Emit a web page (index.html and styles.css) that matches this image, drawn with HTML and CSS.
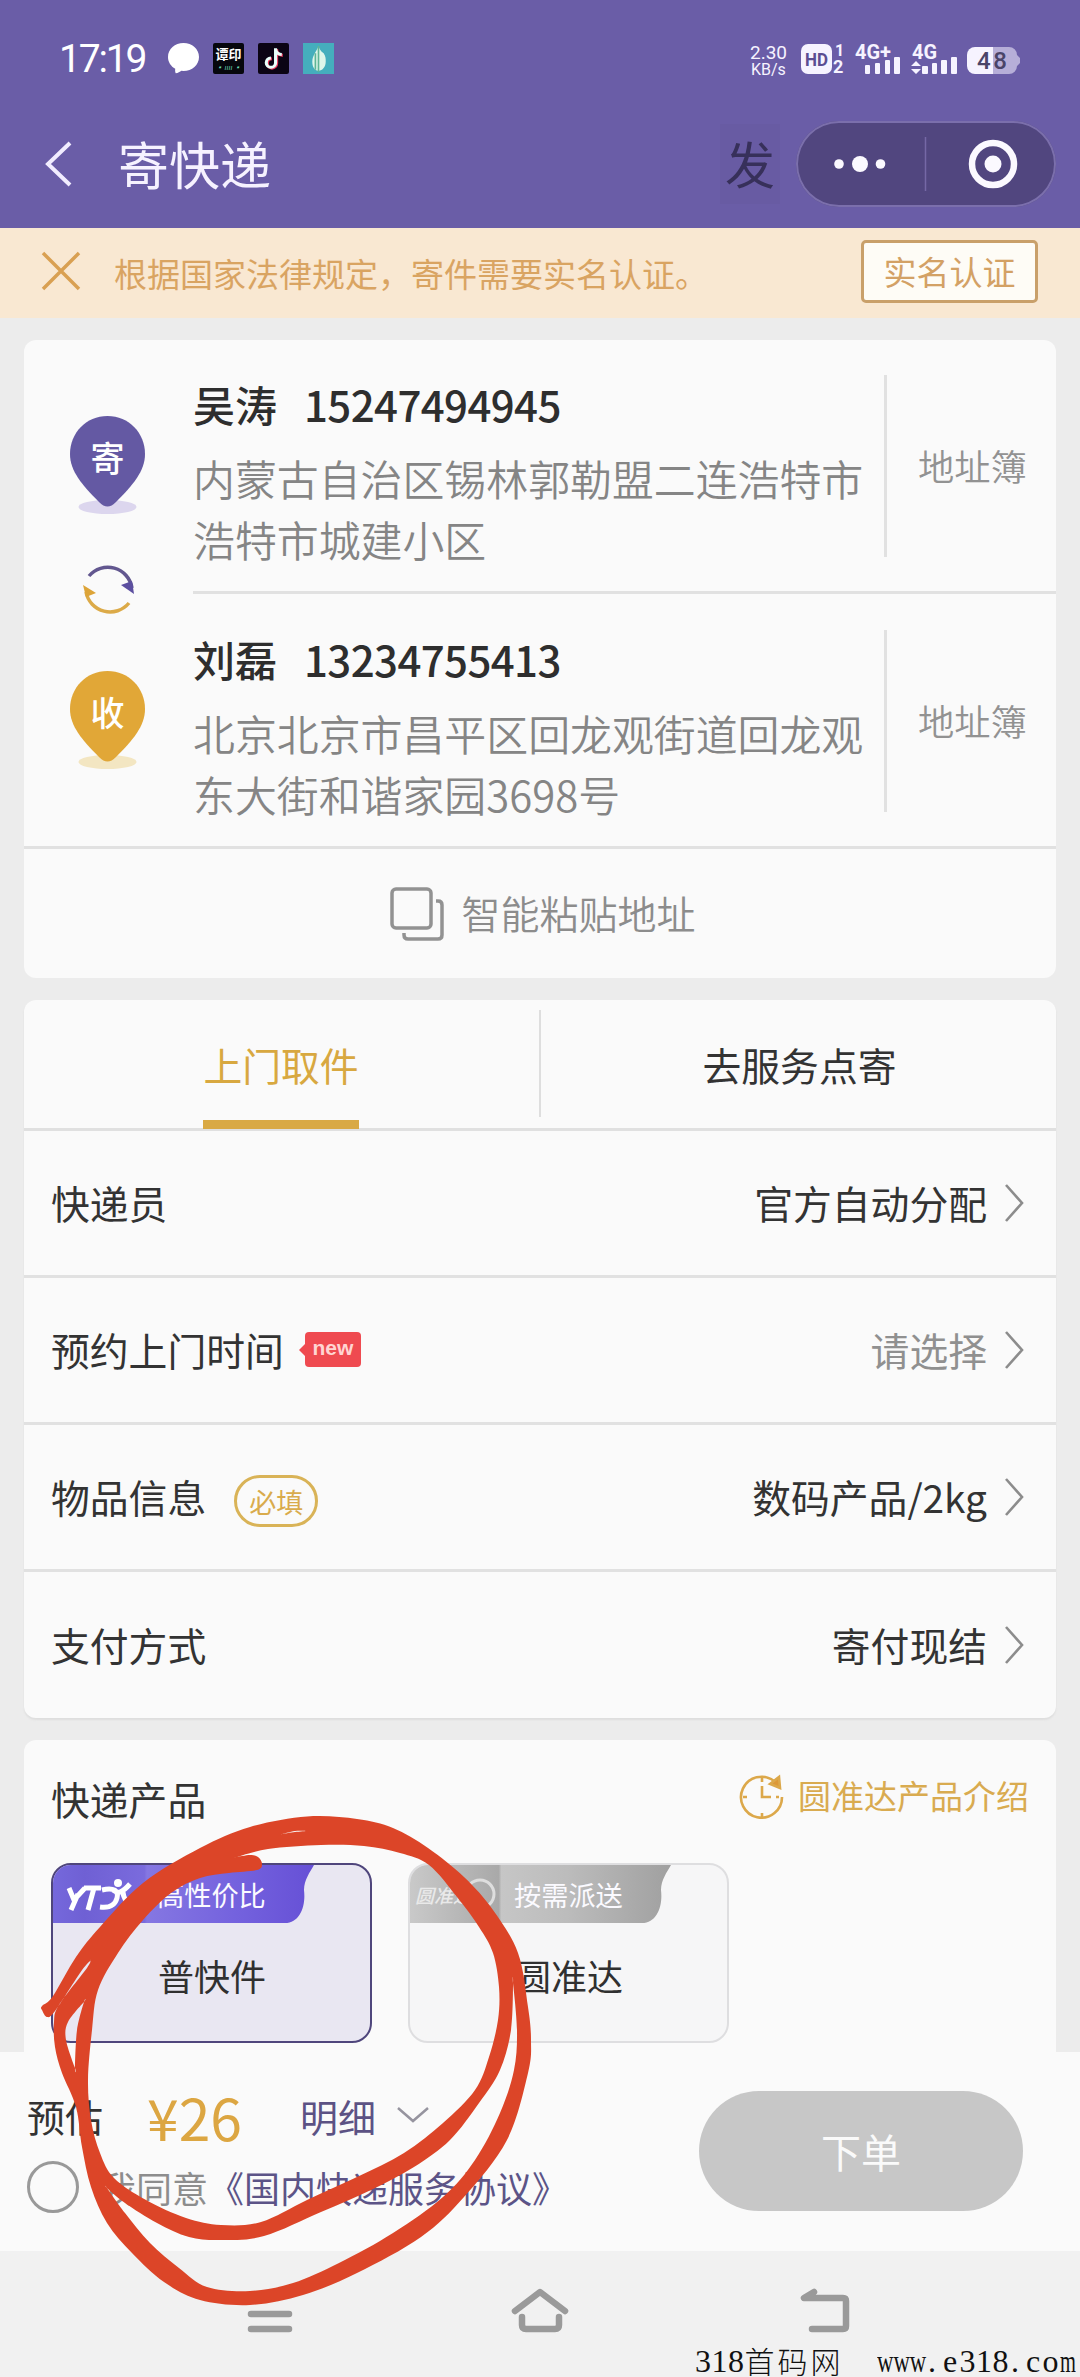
FILE: index.html
```html
<!DOCTYPE html>
<html lang="zh-CN">
<head>
<meta charset="utf-8">
<title>寄快递</title>
<link rel="stylesheet" href="styles.css">
</head>
<body>
<div class="screen">
  <header class="header">
    <div class="status">
      <div class="status-left">
        <span class="clock">17:19</span>
        <svg class="app-icon bubble" viewBox="0 0 30 30"><path d="M15 0C6.700 0 0 5.800 0 13.500c0 5 2.900 9 7 11.500-.2 1.500-.2 3 .5 4.300 2.200-.4 4-1.400 5.500-2.500l2 .2c8.300 0 15-5.800 15-13.500S23.300 0 15 0z" fill="#fff"/></svg>
        <div class="app-icon mint"><b>谭印</b><i>▪ ıııı ▪</i></div>
        <svg class="app-icon" viewBox="0 0 30 30"><rect width="30" height="30" rx="2" fill="#0b0414"/><path d="M17 5v14a4.500 4.500 0 1 1-4.500-4.500M17 6c.5 3 3 5 6 5.200" fill="none" stroke="#e8385c" stroke-width="3" transform="translate(1 .8)"/><path d="M17 5v14a4.500 4.500 0 1 1-4.500-4.500M17 6c.5 3 3 5 6 5.200" fill="none" stroke="#e9fffb" stroke-width="3"/></svg>
        <svg class="app-icon" viewBox="0 0 30 30"><rect width="30" height="30" fill="#45aebd"/><path d="M15 3c1 3 2 5 5 7 2 3 2 5 2 8 0 5-3 9-7 9s-6-4-6-9c0-6 5-11 6-15z" fill="#dff6ea"/><path d="M15 3v25M12 10v16" stroke="#5fb596" stroke-width="1.600"/></svg>
      </div>
      <div class="status-right">
        <div class="speed"><span>2.30</span><span>KB/s</span></div>
        <svg class="signals" width="222" height="36" viewBox="0 0 222 36">
          <g fill="#f6f3ff" font-family="Roboto, sans-serif" font-weight="700">
            <rect x="0" y="3" width="31" height="30" rx="7"/>
            <text x="4" y="25" font-size="19" fill="#5b4d92" textLength="23" lengthAdjust="spacingAndGlyphs">HD</text>
            <text x="34" y="15" font-size="16">1</text><text x="32" y="32" font-size="18">2</text>
            <text x="54" y="18" font-size="21" textLength="36" lengthAdjust="spacingAndGlyphs">4G+</text>
            <rect x="64" y="24" width="5" height="9" rx="1"/><rect x="74" y="22" width="5" height="11" rx="1"/><rect x="84" y="19" width="5" height="14" rx="1"/><rect x="93" y="16" width="6" height="17" rx="1"/>
            <text x="111" y="18" font-size="21" textLength="25" lengthAdjust="spacingAndGlyphs">4G</text>
            <path d="M110 25l5-5 5 5zM110 28l5 5 5-5z"/>
            <rect x="121" y="25" width="6" height="8" rx="1"/><rect x="131" y="22" width="5" height="11" rx="1"/><rect x="140" y="19" width="6" height="14" rx="1"/><rect x="150" y="16" width="6" height="17" rx="1"/>
            <path d="M174 6h18v27h-18a8 8 0 0 1-8-8V14a8 8 0 0 1 8-8z"/>
            <path d="M192 6h16a8 8 0 0 1 8 8l3 3v5l-3 3a8 8 0 0 1-8 8h-16z" fill="#b6aed8"/>
            <text x="176" y="28" font-size="24" font-weight="500" fill="#4a4468" textLength="30">48</text>
          </g>
        </svg>
      </div>
    </div>
    <div class="titlebar">
      <svg class="back" width="28" height="48" viewBox="0 0 28 48"><path d="M25 3L3 24l22 21" fill="none" stroke="#f1ecff" stroke-width="4"/></svg>
      <h1>寄快递</h1>
      <span class="fa">发</span>
      <div class="capsule">
        <svg width="260" height="86" viewBox="0 0 260 86"><g fill="#fbf9ff"><circle cx="43" cy="43" r="4.800"/><circle cx="64" cy="43" r="8"/><circle cx="84.500" cy="43" r="4.800"/><circle cx="197" cy="43" r="8.500"/></g><circle cx="197" cy="43" r="21" fill="none" stroke="#fbf9ff" stroke-width="6.500"/><path d="M129.500 16v54" stroke="#7568a6" stroke-width="1.500"/></svg>
      </div>
    </div>
  </header>

  <div class="notice">
    <svg width="40" height="40" viewBox="0 0 40 40"><path d="M2 2l36 36M38 2L2 38" stroke="#d9a052" stroke-width="3.500"/></svg>
    <p>根据国家法律规定，寄件需要实名认证。</p>
    <button class="verify">实名认证</button>
  </div>

  <main class="main">
    <section class="card addresses">
      <div class="markers">
        <svg width="80" height="102" viewBox="0 0 80 102"><ellipse cx="39.500" cy="91" rx="29" ry="7" fill="#dcd6ee"/><path d="M39.500 0C18 0 2 17 2 38c0 17 12 31 29 48 6 6 11 6 17 0 17-17 29-31 29-48C77 17 61 0 39.500 0z" fill="#6459a3"/><text x="39.500" y="55" text-anchor="middle" class="pin-text">寄</text></svg>
        <svg class="swap" width="54" height="54" viewBox="0 0 54 54"><path d="M7 14A24.500 24.500 0 0 1 50 26" fill="none" stroke="#62578f" stroke-width="3.500"/><path d="M39 23l11-4 2 13z" fill="#5c4fa0"/><path d="M47 41A24.500 24.500 0 0 1 4 30" fill="none" stroke="#dcaa48" stroke-width="3.500"/><path d="M1 23l13 8-10 4z" fill="#dda438"/></svg>
        <svg width="80" height="102" viewBox="0 0 80 102"><ellipse cx="39.500" cy="91" rx="29" ry="7" fill="#f3e6c2"/><path d="M39.500 0C18 0 2 17 2 38c0 17 12 31 29 48 6 6 11 6 17 0 17-17 29-31 29-48C77 17 61 0 39.500 0z" fill="#e1a737"/><text x="39.500" y="55" text-anchor="middle" class="pin-text">收</text></svg>
      </div>
      <div class="people">
        <div class="person">
          <div class="info">
            <div class="who"><span>吴涛</span><span class="phone">15247494945</span></div>
            <p>内蒙古自治区锡林郭勒盟二连浩特市浩特市城建小区</p>
          </div>
          <a class="book">地址簿</a>
        </div>
        <div class="person">
          <div class="info">
            <div class="who"><span>刘磊</span><span class="phone">13234755413</span></div>
            <p>北京北京市昌平区回龙观街道回龙观东大街和谐家园3698号</p>
          </div>
          <a class="book">地址簿</a>
        </div>
      </div>
      <div class="paste">
        <svg width="54" height="54" viewBox="0 0 54 54" fill="none" stroke="#929292" stroke-width="3.500"><rect x="2" y="2" width="39" height="39" rx="4"/><path d="M46 14h2q4 0 4 4v30q0 4-4 4H18q-4 0-4-4v-2"/></svg>
        <span>智能粘贴地址</span>
      </div>
    </section>

    <section class="card options">
      <div class="tabs">
        <div class="tab active"><span>上门取件</span></div>
        <div class="tab"><span>去服务点寄</span></div>
      </div>
      <div class="row"><span>快递员</span><span class="value">官方自动分配</span><svg class="chev" viewBox="0 0 20 38"><path d="M2 1l16 18L2 37"/></svg></div>
      <div class="row"><span>预约上门时间</span><span class="new">new</span><span class="value muted">请选择</span><svg class="chev" viewBox="0 0 20 38"><path d="M2 1l16 18L2 37"/></svg></div>
      <div class="row"><span>物品信息</span><span class="required">必填</span><span class="value">数码产品/2kg</span><svg class="chev" viewBox="0 0 20 38"><path d="M2 1l16 18L2 37"/></svg></div>
      <div class="row"><span>支付方式</span><span class="value">寄付现结</span><svg class="chev" viewBox="0 0 20 38"><path d="M2 1l16 18L2 37"/></svg></div>
    </section>

    <section class="card products">
      <div class="products-head">
        <span>快递产品</span>
        <a class="intro"><svg width="46" height="46" viewBox="0 0 46 46" fill="none" stroke="#dca84a" stroke-width="2.600"><path d="M35 7A20.500 20.500 0 1 0 43 23"/><path d="M23 12v11h9M23 4v4M23 39v4M4 23h4M37 23h3"/><path d="M31 10l9-7 1 11z" fill="#dc9838"/></svg>圆准达产品介绍</a>
      </div>
      <div class="choices">
        <div class="choice selected">
          <svg class="ribbon" width="264" height="58" viewBox="0 0 264 58">
            <defs><linearGradient id="violet"><stop offset="0" stop-color="#7568dc"/><stop offset=".12" stop-color="#6f60d4"/><stop offset=".35" stop-color="#7a6bdd"/><stop offset=".36" stop-color="#8577e2"/><stop offset=".7" stop-color="#7462de"/><stop offset="1" stop-color="#6650d6"/></linearGradient></defs>
            <path d="M0 0h261c-4 7-10 15-10 25 2 16-4 33-19 33H0z" fill="url(#violet)"/>
            <g fill="none" stroke="#fff" stroke-width="5"><path d="M16 23l5 12 11-12M25 29l-7 16M31 23h17M41 23l-6 22"/><path d="M49 25c12-3 17 1 15 8-2 8-9 10-17 9M60 25c5 4 9 3 17-6M70 27c0 6 3 8 6 13"/></g>
            <circle cx="65" cy="18" r="4" fill="#fff"/>
          </svg>
          <span class="ribbon-text">高性价比</span>
          <span class="choice-name">普快件</span>
        </div>
        <div class="choice">
          <svg class="ribbon" width="264" height="58" viewBox="0 0 264 58">
            <defs><linearGradient id="grey"><stop offset="0" stop-color="#c9c9c9"/><stop offset=".34" stop-color="#a9a9a9"/><stop offset=".35" stop-color="#c6c6c6"/><stop offset=".6" stop-color="#bcbcbc"/><stop offset="1" stop-color="#a0a0a0"/></linearGradient></defs>
            <path d="M0 0h261c-4 7-10 15-10 25 2 16-4 33-19 33H0z" fill="url(#grey)"/>
            <circle cx="70" cy="29" r="14" fill="none" stroke="#dedede" stroke-width="3"/>
            <text x="5" y="38" class="mini-logo">圆准达</text>
          </svg>
          <span class="ribbon-text">按需派送</span>
          <span class="choice-name">圆准达</span>
        </div>
      </div>
    </section>
  </main>

  <footer class="checkout">
    <div class="summary">
      <div class="estimate"><span>预估</span><strong>¥26</strong><a>明细</a><svg width="32" height="18" viewBox="0 0 32 18"><path d="M1 2l15 13L31 2" fill="none" stroke="#96949f" stroke-width="2.500"/></svg></div>
      <label class="agree"><span class="radio"></span><span>我同意<a>《国内快递服务协议》</a></span></label>
    </div>
    <button class="submit">下单</button>
  </footer>

  <nav class="sysnav">
    <svg width="1080" height="126" viewBox="0 0 1080 126" fill="none" stroke="#9a9a9a" stroke-width="6.500" stroke-linecap="round" stroke-linejoin="round"><path d="M251 63h38M251 78h38"/><path d="M515 60l25-19 25 19M522 66v8q0 4 4 4h29q4 0 4-4v-8"/><path d="M814 41l-10 6h39q3 0 3 3v25q0 3-3 3h-31"/></svg>
    <div class="sitemark"><span class="num">318</span><span class="han">首码网</span><span class="num www">www</span><span class="num dot">.</span><span class="num e">e</span><span class="num">318</span><span class="num dot">.</span><span class="num co">co</span><span class="num m">m</span></div>
  </nav>

  <svg class="scribble" width="1080" height="2377" viewBox="0 0 1080 2377"><path id="ink" fill="#dc4528" fill-rule="evenodd"/></svg>
</div>
<script src="ink.js"></script>
</body>
</html>
```
FILE: styles.css
```css
* { box-sizing: border-box; }
body {
  margin: 0;
  background: #ececec;
  font-family: "Noto Sans CJK SC", sans-serif;
  color: #333;
}
h1, p { margin: 0; font-weight: 400; }
button { font-family: inherit; padding: 0; margin: 0; }
svg { display: block; flex: none; }
.screen {
  position: relative;
  width: 1080px;
  height: 2377px;
  overflow: hidden;
  display: flex;
  flex-direction: column;
}

/* header */
.header { height: 228px; flex: none; background: #6a5da7; }
.status { height: 116px; display: flex; justify-content: space-between; }
.status-left { display: flex; padding: 43px 0 0 59px; }
.clock {
  width: 109px;
  font: 400 39px/32px Roboto, sans-serif;
  letter-spacing: -2.2px;
  color: #fff;
}
.app-icon { width: 31px; height: 31px; margin-right: 14px; }
.mint {
  background: #07070d;
  border-radius: 2px;
  color: #fff;
  text-align: center;
  display: flex;
  flex-direction: column;
}
.mint b { font-size: 13px; line-height: 21px; }
.mint i { font-size: 7px; line-height: 6px; color: #69d9b4; }
.status-right { display: flex; padding: 41px 57px 0 0; }
.speed {
  display: flex;
  flex-direction: column;
  width: 51px;
  padding-top: 3px;
  font: 400 19px/17px Roboto, sans-serif;
  color: #f6f3ff;
}
.speed span:last-child { font-size: 16px; padding-left: 1px; }
.titlebar { display: flex; align-items: center; height: 96px; padding-left: 45px; }
.titlebar h1 { margin: 0 0 3px 45px; font-size: 51px; line-height: 60px; color: #f6f2ff; width: 602px; }
.fa {
  width: 60px;
  height: 80px;
  line-height: 76px;
  text-align: center;
  font-size: 50px;
  color: #37305a;
  background: #685ba3;
}
.capsule {
  width: 260px;
  height: 86px;
  margin-left: 16px;
  border-radius: 43px;
  background: #51467f;
  box-shadow: inset 0 0 0 2px #7b6fac;
}

/* notice */
.notice {
  height: 90px;
  flex: none;
  display: flex;
  align-items: center;
  padding: 0 42px 4px 41px;
  background: #f9e8d2;
  color: #d9a462;
}
.notice p { margin-left: 33px; flex: 1; font-size: 33px; line-height: 40px; padding-top: 3px; }
.verify {
  width: 177px;
  height: 63px;
  border: 3px solid #c9a06a;
  border-radius: 5px;
  background: #fefcf6;
  color: #d3a165;
  font-size: 33px;
  line-height: 54px;
}

/* cards */
.main { height: 1734px; padding: 22px 24px 0; display: flex; flex-direction: column; gap: 22px; flex: none; }
.card { background: #fafafa; border-radius: 12px; flex: none; }
.addresses { height: 638px; display: grid; grid-template: 506px 132px / 169px 1fr; }
.markers { display: flex; flex-direction: column; align-items: flex-start; padding: 76px 0 0 44px; }
.swap { margin: 44px 0 55px 14px; }
.pin-text { font-family: "Noto Sans CJK SC", sans-serif; font-size: 34px; font-weight: 500; fill: #fff; }
.person { height: 251px; display: flex; padding: 35px 0; }
.person + .person { border-top: 3px solid #e1e1e1; height: 255px; padding-top: 36px; }
.info { width: 694px; border-right: 3px solid #e1e1e1; height: 182px; }
.who { display: flex; gap: 27px; height: 64px; margin-top: 1px; font-size: 42px; line-height: 56px; font-weight: 500; color: #2e2e2e; }
.phone { letter-spacing: -.6px; }
.info p { width: 673px; font-size: 41.900px; line-height: 61px; margin-top: 7px; font-weight: 350; color: #858585; word-break: break-all; }
.book { padding: 65px 0 0 31px; font-size: 36.3px; line-height: 50px; color: #929292; font-weight: 350; }
.paste {
  grid-column: 1 / 3;
  border-top: 3px solid #e1e1e1;
  display: flex;
  justify-content: center;
  padding: 38px 0 0 6px;
  gap: 17px;
  font-size: 39px;
  line-height: 50px;
  color: #8c8c8c;
  font-weight: 350;
}

.options { height: 718px; font-size: 38.800px; box-shadow: 0 2px 2px #dedede; }
.tabs { display: flex; height: 131px; padding-top: 10px; border-bottom: 3px solid #e0e0e0; }
.tab { flex: 1; display: flex; justify-content: center; line-height: 109px; padding-left: 2px; }
.tab.active { flex: none; width: 517px; color: #d8a840; padding: 0 3px 0 0; background: linear-gradient(#dedede, #dedede) right top / 2px 107px no-repeat; }
.tab.active span { height: 119px; border-bottom: 9px solid #d9a944; }
.row { height: 147px; display: flex; align-items: center; padding: 0 32px 2px 27px; border-bottom: 3px solid #e1e1e1; }
.row:last-child { border: 0; height: 146px; }
.value { margin-left: auto; }
.muted { color: #909090; }
.chev { width: 20px; height: 38px; margin: 2px 0 0 17px; fill: none; stroke: #8c8c8c; stroke-width: 2.600; }
.new {
  position: relative;
  width: 56px;
  height: 35px;
  margin-left: 21px;
  border-radius: 4px;
  background: #ef4a50;
  color: #ffd5d2;
  font: 700 21px/32px "Liberation Sans", sans-serif;
  text-align: center;
}
.new::before {
  content: "";
  position: absolute;
  left: -6px;
  top: 12px;
  border: 6px solid transparent;
  border-left: 0;
  border-right-color: #ef4a50;
}
.required {
  width: 84px;
  height: 52px;
  margin: 10px 0 0 28px;
  border: 3px solid #d9b357;
  border-radius: 26px;
  color: #d9ab4c;
  font-size: 27px;
  line-height: 47px;
  text-align: center;
}

.products { height: 312px; border-radius: 12px 12px 0 0; }
.products-head { height: 123px; display: flex; justify-content: space-between; padding: 34px 27px 0 27px; font-size: 38.800px; line-height: 48px; }
.intro { display: flex; gap: 13px; font-size: 33px; line-height: 42px; color: #d9ab50; }
.choices { display: flex; gap: 36px; padding-left: 27px; }
.choice {
  position: relative;
  width: 321px;
  height: 180px;
  border: 2px solid #dedee0;
  border-radius: 20px;
  background: #f6f6f7;
  overflow: hidden;
}
.selected { background: #e9e7f2; border-color: #4f467c; }
.ribbon { position: absolute; left: 0; top: 0; }
.ribbon-text { position: absolute; left: 104px; top: 11px; font-size: 27.2px; line-height: 36px; color: #fbfaff; }
.choice-name { display: block; padding: 84px 0 0 105px; font-size: 36px; line-height: 52px; color: #303030; }
.mini-logo { font: italic 500 19px "Noto Sans CJK SC", sans-serif; fill: #e9e9e9; }

/* checkout */
.checkout { height: 199px; flex: none; background: #fafafa; display: flex; justify-content: space-between; padding: 32px 57px 0 27px; }
.estimate { display: flex; align-items: center; height: 66px; padding-bottom: 4px; font-size: 38px; }
.estimate strong { margin: 2px 0 0 44px; font-size: 57px; line-height: 62px; font-weight: 400; color: #dca642; }
.estimate a { margin-left: 58px; color: #5c5284; }
.estimate svg { margin: 0 0 0 21px; }
.agree { display: flex; align-items: center; height: 74px; font-size: 36px; color: #8d8d8d; }
.agree a { color: #5c5487; }
.radio { width: 52px; height: 52px; margin-right: 21px; border: 3px solid #999; border-radius: 50%; flex: none; }
.submit { margin-top: 7px; width: 324px; height: 120px; border: 0; border-radius: 60px; background: #c7c7c7; color: #fafafa; font-size: 40px; }

/* system navigation */
.sysnav { position: relative; height: 126px; flex: none; background: #f1f1f1; }
.sitemark {
  position: absolute;
  left: 695px;
  bottom: 0;
  display: flex;
  height: 31px;
  line-height: 31px;
  color: #111;
}
.num { width: 49.5px; font-family: "Liberation Serif", serif; font-size: 32px; letter-spacing: .5px; }
.han { width: 99px; font-size: 30px; font-weight: 300; letter-spacing: 3px; line-height: 29px; white-space: nowrap; }
.www { margin-left: 33px; letter-spacing: 0; transform: scaleX(.71); transform-origin: left; }
.dot { width: 17px; padding-left: 2px; }
.e { width: 16.5px; }
.co { width: 34px; letter-spacing: 2.2px; }
.m { width: 16px; letter-spacing: 0; transform: scaleX(.64); transform-origin: left; }

.scribble { position: absolute; left: 0; top: 0; pointer-events: none; }
```
FILE: ink.js
```js
// Hand-drawn ring: each contour is a list of points joined by a smooth curve.
// A point listed twice keeps its corner sharp.
const contours = [
  "42,2010 42,2006 53,1996 76,1957 100,1927 143,1883 200,1848 250,1827 307,1816.500 357,1819 393,1828 428,1848 464,1877 493,1910 518,1953 528,2007 531,2040 528,2073 507,2140 464,2197 421,2237 357,2273 303,2295 250,2305 200,2300 164,2282 132,2253 107,2223 91,2187 82,2147 76,2107 62,2073 55,2047 54,2022 59,2005 87,1968 90,1961 90,1961 80,1973 55,2011 47,2017",
  "237,1857 237,1857 268,1849 321,1845 364,1846 400,1853 429,1865 457,1897 479,1927 493,1953 499,1987 498,2020 489,2057 475,2090 443,2123 404,2153 357,2177 307,2200 261,2222 221,2225 186,2218 146,2200 114,2178 100,2153 91,2120 88,2080 92,2030 98,1990 118,1953 143,1920 171,1893 200,1878 229,1873 257,1870 262,1864 258,1857 250,1855",
  "513,1983 513,1983 517,2030 514,2070 500,2113 475,2160 443,2197 393,2233 339,2263 293,2283 250,2291 207,2287 179,2268 150,2243 125,2213 107,2188 107,2188 125,2203 157,2223 189,2237 221,2240 264,2236 321,2212 371,2190 414,2167 450,2140 479,2103 500,2070 511,2030",
  "84,2002 84,2002 68,2022 66,2040 75,2068 75,2068 77,2030",
  "282,1834 282,1834 295,1831 307,1831 307,1831 295,1832"
];

function smooth(text) {
  const p = text.split(" ").map(s => s.split(",").map(Number));
  const n = p.length;
  let d = `M${p[0]}`;
  for (let i = 0; i < n; i++) {
    const a = p[(i + n - 1) % n], b = p[i], c = p[(i + 1) % n], e = p[(i + 2) % n];
    const corner = (u, v) => u[0] === v[0] && u[1] === v[1];
    const c1 = corner(a, b) ? b : [b[0] + (c[0] - a[0]) / 6, b[1] + (c[1] - a[1]) / 6];
    const c2 = corner(c, e) ? c : [c[0] - (e[0] - b[0]) / 6, c[1] - (e[1] - b[1]) / 6];
    d += `C${c1} ${c2} ${c}`;
  }
  return d + "Z";
}

document.getElementById("ink").setAttribute("d", contours.map(smooth).join(""));
```
